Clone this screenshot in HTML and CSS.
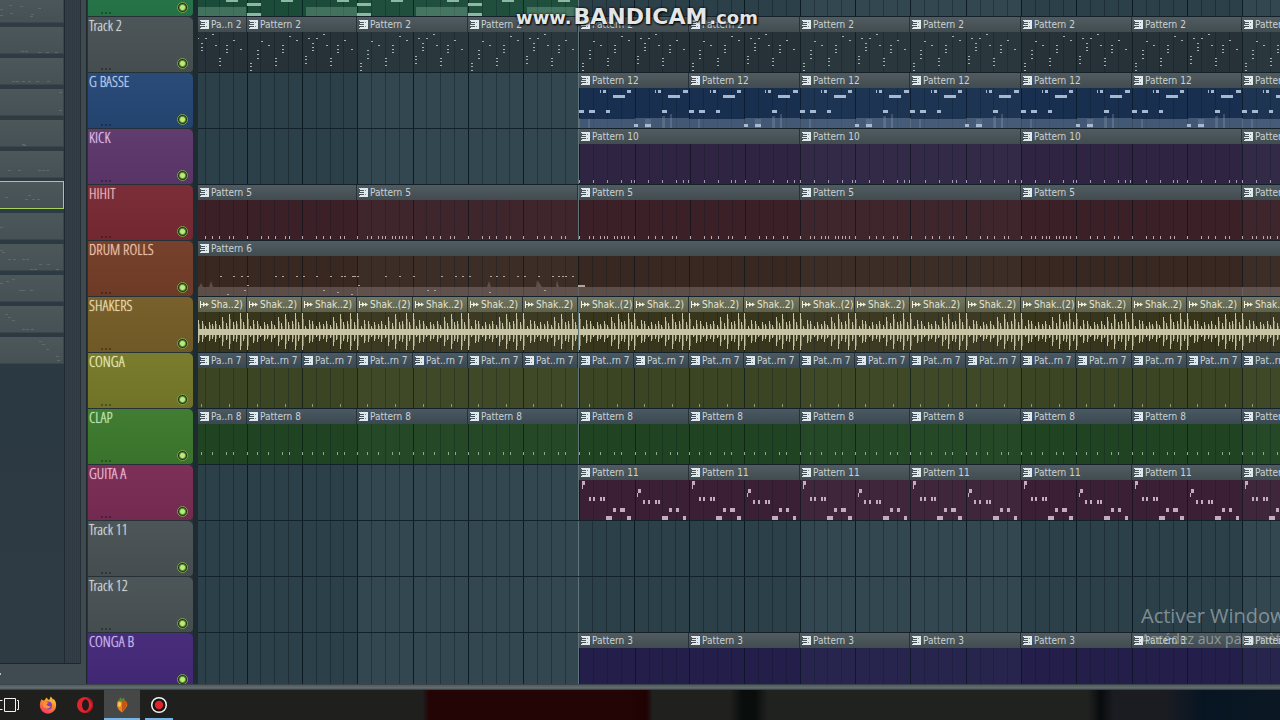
FILE: index.html
```
<!DOCTYPE html>
<html lang="fr">
<head>
<meta charset="utf-8">
<title>Playlist</title>
<link rel="stylesheet" href="styles.css">
</head>
<body>
<svg class="defs" width="0" height="0" aria-hidden="true">
  <symbol id="i-pattern" viewBox="0 0 9 9"><path d="M5 0h4v9H5V8H1V7h4V6H0V5h5V4H1V3h4V2H1V1h4z" fill="#dfe9ee"/><path d="M0 0h5v1H0zM0 8h5v1H0z" fill="#dfe9ee"/><path d="M6 2h1v1H6zM6 6h1v1H6z" fill="#7d8a90"/></symbol>
  <symbol id="i-audio" viewBox="0 0 9 9"><path d="M0 1h1v7H0zM1 4h7v1H1zM3 2l3 2.500-3 2.500zM6 2.500l3 2-3 2z" fill="#f0f0dc"/></symbol>
</svg>
<div class="app">
  <div class="workspace">
    <aside class="side">
      <div class="side-main">
        <div class="picker" id="picker"></div>
        <div class="scroll"></div>
      </div>
      <div class="side-foot"></div>
    </aside>
    <main class="playlist" id="playlist"></main>
    <div class="brand"><span>www.</span><b>BANDICAM</b><span>.com</span></div>
    <div class="activate"><p class="activate-title">Activer Windows</p><p class="activate-text">Accédez aux paramètres</p></div>
  </div>
  <div class="edge"></div>
  <nav class="taskbar">
    <button class="task first" aria-label="Task view"><svg width="20" height="16" viewBox="0 0 20 16" fill="none" stroke="#f2f2f2" stroke-width="1"><path d="M4.500 1.500h11v13h-11zM0 3.500h2.500M0 12.500h2.500M17 3.500h1.500v9H17"/></svg></button>
    <button class="task" aria-label="Firefox"><svg width="18" height="18" viewBox="0 0 18 18"><defs><linearGradient id="ff" x1=".8" y1="0" x2=".3" y2="1"><stop offset="0" stop-color="#ffd83d"/><stop offset=".45" stop-color="#ff8a2b"/><stop offset="1" stop-color="#f0356b"/></linearGradient></defs><path d="M2.500 3.200 4 4.600Q5 4 5.800 4.200 6 2.500 8 1.500 8 3.200 10 4 11.500 2.500 11.500.5q2 1.500 2.400 3.300l1-.8Q17.500 6 17.200 9.600A8.200 8.200 0 0 1 .8 9.300Q.8 6 2.500 3.200z" fill="url(#ff)"/><circle cx="9" cy="9.500" r="4" fill="#7542c4"/><path d="M3.500 7q2-2 4.500-1l2 1Q8 7.200 7.500 8.500q1.500 2.500 4.500 1.500-1.500 3.200-4.700 2.700Q3.800 12 3.500 7z" fill="#ff8f34"/></svg></button>
    <button class="task" aria-label="Opera"><svg width="18" height="18" viewBox="0 0 18 18"><circle cx="9" cy="9" r="8" fill="#e2242f"/><path d="M9 1a8 8 0 1 1 0 16q7-4 7-8T9 1z" fill="#a81722"/><ellipse cx="9.500" cy="9" rx="3.500" ry="5.800" fill="#241a1c"/></svg></button>
    <button class="task active" aria-label="FL Studio"><svg width="14" height="18" viewBox="0 0 14 18"><path d="M3 5Q7 2 11 5.500q3 3-1 7.500-2 3-3 3.500Q3 14 2 10.500 1.200 7 3 5z" fill="#e8861e"/><path d="M7 4q4 0 5 3-1 6-5 9z" fill="#c65416"/><path d="M4 6q2-1 2 2T4 11Q2 8 4 6z" fill="#ffc552"/><path d="M5 1 7 3l2-1.500L9.500 4 7 6 3 5l1.500-1.500z" fill="#4f8a36"/></svg></button>
    <button class="task open" aria-label="Recorder"><svg width="18" height="18" viewBox="0 0 18 18"><circle cx="9" cy="9" r="7.300" fill="#151515" stroke="#f4f4f4" stroke-width="1.500"/><circle cx="9" cy="9" r="4.200" fill="#e0242c"/></svg></button>
  </nav>
</div>
<script src="playlist.js"></script>
</body>
</html>
```
FILE: styles.css
```
* { box-sizing: border-box; }
body { margin: 0; background: #27343c; font-family: "DejaVu Sans Condensed", "DejaVu Sans", sans-serif; }
button { border: 0; padding: 0; background: none; font: inherit; color: inherit; }
.defs { position: absolute; }
.app { height: 100vh; display: flex; flex-direction: column; overflow: hidden; }
.workspace { flex: 1; min-height: 0; display: flex; position: relative; overflow: hidden; background: #3f4b50; }

/* pattern picker */
.side { width: 87px; flex: none; display: flex; flex-direction: column; border-right: 1px solid #1d272c; }
.side-main { flex: 1; min-height: 0; display: flex; margin-right: 5px; border-bottom: 1px solid #1c262c; border-right: 1px solid #242e34; }
.picker { flex: 1; overflow: hidden; background: linear-gradient(#2f3c42, #2b3943 60%, #2f3b43); display: flex; flex-direction: column; gap: 4px; }
.pick { height: 27px; flex: none; background: linear-gradient(#4b5759, #455154); border: solid #3a464a; border-width: 0 1px 1px 0; }
.pick:first-child { margin-top: -4px; }
.pick svg { display: block; width: 63px; height: 25px; }
.pick.selected { height: 28px; margin-top: -1px; border: 1px solid #a5d45e; border-left: 0; }
.scroll { width: 16px; border-left: 1px solid #1f2a30; background: repeating-linear-gradient(90deg, #343e46 0 1px, #2f3941 1px 2px); }
.side-foot { height: 20px; }
.side-foot::before { content: ""; display: block; width: 1px; height: 2px; margin-top: 9px; background: #b6bfc0; }

/* tracks */
.playlist { flex: 1; min-width: 0; overflow: hidden; background: #1e2b31; }
.track { height: 56px; display: flex; }
.track:first-child { margin-top: -39px; }
.label { width: 106px; flex: none; position: relative; margin-right: 5px; border-left: 1px solid #2a3439; background: #263137; }
.plate { height: 55px; padding-left: 1px; border-radius: 0 5px 4px 0; background-color: var(--plate); background-image: linear-gradient(rgba(255,255,255,.02), rgba(0,0,0,.06)); color: var(--ink); font-family: "Open Sans Condensed Light", "Open Sans Condensed", "DejaVu Sans Condensed", sans-serif; font-size: 15px; line-height: 17px; text-shadow: 0 0 1px var(--ink); }
.plate::after { content: ""; position: absolute; left: 13px; bottom: 3px; width: 11px; height: 2px; background: repeating-linear-gradient(90deg, rgba(0,0,0,.3) 0 2px, transparent 2px 4px); }
.led { position: absolute; right: 5px; bottom: 4px; width: 11px; height: 11px; border-radius: 50%; border: 1px solid #7ba04d; background: radial-gradient(circle, #b6ee74 0 2px, #22301a 4px); }
.lane { flex: 1; min-width: 0; position: relative; overflow: hidden; display: flex; }
.lane-grid { position: absolute; inset: 0; }
.clip { position: relative; flex: none; height: 55px; overflow: hidden; }
.clip.playhead { border-left: 1px solid #5f7478; }
.head { height: 15px; padding-left: 2px; display: flex; align-items: center; gap: 2px; overflow: hidden; white-space: nowrap; background: linear-gradient(#525c60, #414c50); border-right: 1px solid #273137; color: #c9d2d5; font-size: 10px; line-height: 15px; }
.head svg { width: 9px; height: 9px; flex: none; }
.track.audio .head { background: linear-gradient(#727560, #5e614a); color: #e4e5d2; }
.track.cool .head { background: linear-gradient(#4b5963, #3a4852); }
.body { display: block; }

/* overlays */
.brand { position: absolute; top: 4px; left: 50%; margin-left: -124px; display: flex; gap: 2px; align-items: baseline; font-family: "DejaVu Sans", sans-serif; font-weight: bold; font-size: 18px; line-height: 26px; color: #e2e6e6; text-shadow: 0 0 3px #000, 1px 1px 2px #000; }
.brand b { font-size: 22px; }
.activate { position: absolute; left: calc(100% - 139px); bottom: 35px; white-space: nowrap; font-family: "Open Sans", "Noto Sans", sans-serif; color: rgba(200,210,212,.55); }
.activate p { margin: 0; }
.activate-title { font-size: 20px; line-height: 26px; }
.activate-text { font-size: 14px; line-height: 20px; }

/* taskbar */
.edge { height: 6px; flex: none; background: linear-gradient(#4f595e, #666f74 60%, #30383c); border-top: 1px solid #3b454a; }
.taskbar { height: 30px; flex: none; display: flex; background: linear-gradient(90deg, #1f1f1e 0 33%, #240506 33.500% 49%, #210203 50.500%, #20211f 51% 57%, #090d0c 58% 59%, #20221f 60% 85%, #080b0d 86%, #1b1c22 87% 91%, #071522 94%, #0b1824); }
.task { width: 37px; height: 30px; display: flex; align-items: center; justify-content: center; }
.task.first { width: 29px; justify-content: flex-start; }
.task.active { width: 36px; margin-left: 1px; background: #464848; border-bottom: 2px solid #76b5e6; padding-top: 2px; }
.task.open { width: 28px; margin-left: 5px; border-bottom: 2px solid #76b5e6; padding-top: 2px; }
```
FILE: playlist.js
```
const BAR = 55.32;
const ORIGIN = 380.49;           // timeline x of the bar under the playhead
const px = bar => Math.round(ORIGIN + bar * BAR);
const lastBar = Math.ceil((window.innerWidth - 198 - ORIGIN) / BAR / 4) * 4;
const rect = (x, y, w, h, c) => `<rect x="${x}" y="${y}" width="${w}" height="${h}" fill="${c}"/>`;

function grid(x0, x1, h, strength) {
  let s = '';
  for (let b = -8; b <= lastBar; b += 4) {
    if (b % 8) s += rect(px(b) - x0, 0, px(b + 4) - px(b), h, `rgba(190,210,220,${strength === 1 ? 0.05 : 0.03})`);
  }
  for (let q = -28; q <= lastBar * 4; q++) {
    const x = px(q / 4);
    if (x < x0 || x >= x1) continue;
    s += rect(x - x0, 0, 1, h, q % 4 ? `rgba(8,22,30,${strength * 0.38})` : `rgba(4,16,22,${strength * 0.8})`);
  }
  return s;
}

const cells = (xs, y, w, h) => xs.map(x => [x, y, w, h]);
const ticks = (xs, y) => cells(xs, y, 1, 3);
const column = (x, ys) => ys.map(y => [x, y, 2, 1]);

const melody = [
  ...column(3, [31, 34, 38]), ...column(10, [18, 22, 26]), ...column(14, [9]), ...column(21, [13]),
  ...column(28, [26, 29, 33]), ...column(35, [13, 17, 20]), ...column(42, [4]), ...column(49, [8]),
  ...column(58, [24, 27, 31]), ...column(61, [6]), ...column(65, [11, 15, 18]), ...column(69, [6]),
  ...column(76, [2]), ...column(79, [13]), ...column(83, [26, 29, 33]), ...column(90, [13, 17, 20]),
  ...column(97, [8]), ...column(104, [17])
];
const bass = [
  [0, 22, 5, 3], [10, 22, 6, 3], [27, 22, 4, 3], [21, 2, 1, 3], [24, 2, 3, 3], [34, 7, 12, 3], [48, 2, 4, 3],
  [76, 2, 1, 3], [79, 2, 3, 3], [89, 7, 12, 3], [104, 2, 5, 3], [83, 22, 5, 3], [55, 36, 4, 3], [66, 36, 6, 3]
];
const guitar = [
  [3, 1, 3, 4], [3, 5, 1, 4], ...cells([10, 14, 21, 24], 17, 2, 4), [34, 28, 3, 4], [41, 28, 5, 4], [27, 36, 6, 4], [48, 36, 4, 4],
  [59, 9, 3, 4], [58, 13, 1, 4], ...cells([64, 69, 76, 79], 20, 2, 4), [90, 28, 3, 4], [97, 28, 3, 4], [83, 36, 6, 4], [104, 36, 3, 4]
];
const hats = [0, 10, 14, 21, 25, 28, 35, 38, 42, 45, 49];
[1, 2, 3].forEach(b => [0, 14, 21, 28, 38, 42].forEach(x => hats.push(Math.round(b * BAR) + x)));
const kick = [0, 14, 28, 42, 52, 55, 69, 83, 97, 104, 109, 125, 139, 152, 156, 166, 180, 194, 208, 215];
const lead = [[34, 23, 12, 3], [90, 23, 12, 3], [0, 27, 14, 3], [0, 37, 14, 3]];

// Drum rolls are a single long take, listed in timeline pixels.
const rolls = [
  ...cells([22, 35, 43, 49, 77, 84, 98, 105, 118, 132, 143, 146, 154, 156, 159, 187, 201, 215, 243, 257, 264, 271, 292, 298, 305, 319, 326, 340, 354, 360, 364, 367, 374], 20, 2, 1),
  ...column(49, [29]), ...column(160, [29]), ...column(46, [34]), ...column(29, [38]), ...column(125, [34]), ...column(139, [36]),
  ...column(153, [38]), ...column(229, [34]), ...column(236, [34]), ...column(291, [36]), ...column(346, [34]), [380, 29, 7, 2]
];

const peaks = [19, 6, 12, 11, 6, 10, 8, 11, 7, 15, 9, 18, 10, 11, 19, 10];
function wave(x0, x1) {
  let s = rect(0, 17, x1 - x0, 6, '#c6c4a4');
  for (let b = -7; b < lastBar; b++) {
    peaks.forEach((p, i) => {
      const x = px(b + i / 16);
      if (x < x0 - 1 || x > x1) return;
      const c = x - x0;
      s += rect(c, 20 - p, 1, p * 2 - 1, '#c6c4a4') + rect(c + 1, 20 - Math.round(p * 0.7), 1, Math.round(p * 1.4), 'rgba(198,196,164,.5)');
    });
  }
  return s;
}

const every = (name, step, from, first) => {
  const list = first ? [[name[0], first[0], first[1]]] : [];
  for (let b = from; b < lastBar; b += step) list.push([name[1], b, b + step]);
  return list;
};
const START = (0 - ORIGIN) / BAR;

const tracks = [
  { name: 'Track 1', plate: '#26784a', ink: '#bfeacb', body: '#1b4b39', note: '#8fb8a2', period: 2, notes: lead, bands: [[59, 31, 51, 9, 'rgba(170,215,190,.28)']],
    clips: [['Pattern 1', START, -6], ['Pattern 1', -6, -4], ['Pattern 1', -4, -2], ['Pattern 1', -2, 0]] },
  { name: 'Track 2', plate: '#495254', ink: '#d0d7d8', body: '#263238', note: '#a3b1b5', period: 2, notes: melody, clips: every(['Pa..n 2', 'Pattern 2'], 2, -6, [START, -6]) },
  { name: 'G BASSE', plate: '#264876', ink: '#b7cdef', body: '#182f4f', note: '#a6b9d1', period: 2, notes: bass,
    bands: [[0, 31, 56, 9, 'rgba(140,160,185,.36)'], [56, 30, 55, 10, 'rgba(140,160,185,.36)'], [83, 28, 3, 12, 'rgba(160,180,200,.25)'], [91, 26, 2, 14, 'rgba(160,180,200,.25)'], [9, 31, 2, 9, 'rgba(160,180,200,.2)'], [66, 31, 6, 9, 'rgba(160,180,200,.2)']], clips: every(['', 'Pattern 12'], 2, 0) },
  { name: 'KICK', plate: '#5d386c', ink: '#dfbfe9', body: '#2f2543', note: '#a49ab2', period: 4, notes: ticks(kick, 36), clips: every(['', 'Pattern 10'], 4, 0) },
  { name: 'HIHIT', plate: '#792a34', ink: '#eeb9bf', body: '#3b2028', note: '#bda8ab', period: 4, notes: ticks(hats, 36), clips: every(['Pattern 5', 'Pattern 5'], 4, -4, [START, -4]) },
  { name: 'DRUM ROLLS', plate: '#743e28', ink: '#edc4ae', body: '#392822', note: '#b5a49d', once: rolls, bands: [[0, 31, 111, 9, 'rgba(180,165,165,.3)']], period: 2, clips: [['Pattern 6', START, lastBar]] },
  { name: 'SHAKERS', plate: '#765e28', ink: '#ecddb0', body: '#38351d', audio: true, clips: every(['Sha..2)', 'Shak..2)'], 1, -6, [START, -6]) },
  { name: 'CONGA', plate: '#777a29', ink: '#e9ebb5', body: '#3b4523', note: '#8d9970', cool: true, period: 1, notes: ticks([10, 38], 36), clips: every(['Pa..n 7', 'Pat..rn 7'], 1, -6, [START, -6]) },
  { name: 'CLAP', plate: '#3d7a2e', ink: '#c2e9b6', body: '#204422', note: '#8bab8c', cool: true, period: 1, notes: ticks([0, 10, 21, 35, 42], 28), clips: every(['Pa..n 8', 'Pattern 8'], 2, -6, [START, -6]) },
  { name: 'GUITA A', plate: '#7a2c55', ink: '#eebbd5', body: '#3b2035', note: '#c4acc0', period: 2, notes: guitar, clips: every(['', 'Pattern 11'], 2, 0) },
  { name: 'Track 11', plate: '#495254', ink: '#d0d7d8', clips: [] },
  { name: 'Track 12', plate: '#495254', ink: '#d0d7d8', clips: [] },
  { name: 'CONGA B', plate: '#45297a', ink: '#cdbaf0', body: '#231f4a', clips: every(['', 'Pattern 3'], 2, 0) }
];

function clipHtml(t, [name, from, to]) {
  const x0 = Math.max(0, px(from)), x1 = px(to), w = x1 - x0;
  let s = rect(0, 0, w, 40, t.body) + grid(x0, x1, 40, 0.75);
  for (let b = -8; t.period && b < to; b += t.period) {
    const at = px(b) - x0;
    for (const [x, y, bw, h, c] of t.bands || []) if (at + x + bw > 0 && at + x < w) s += rect(at + x, y, bw, h, c);
    for (const [x, y, nw, h] of t.notes || []) if (at + x + nw > 0 && at + x < w) s += rect(at + x, y, nw, h, t.note);
  }
  if (t.once) {
    s += t.once.map(([x, y, nw, h]) => rect(x, y, nw, h, t.note)).join('');
    s += '<path d="M1 31l2-4 2 4zM11 31l2-6 2 6zM289 31l2-6 2 6zM338 31l1-7 3 4 2 3zM358 31l1-7 2 7z" fill="rgba(180,165,165,.3)"/>';
  }
  if (t.audio) {
    if (name !== 'Sha..2)' && from % 4 === 0) name = 'Shak..(2)';
    s += wave(x0, x1);
  }
  const icon = t.audio ? 'i-audio' : 'i-pattern';
  const gap = t.first && x0 > 0 ? `margin-left:${x0}px;` : '';
  t.first = false;
  return `<div class="clip${from === 0 ? ' playhead' : ''}" style="${gap}width:${w}px"><div class="head"><svg><use href="#${icon}"/></svg><span>${t.name === 'Track 1' ? '' : name}</span></div><svg class="body" width="${w}" height="40">${s}</svg></div>`;
}

const laneWidth = window.innerWidth - 198;
document.getElementById('playlist').innerHTML = tracks.map(t => {
  t.first = true;
  const back = rect(0, 0, laneWidth, 56, '#2c404a') + grid(0, laneWidth, 56, 1) + rect(px(0), 0, 1, 56, '#5f7478') + rect(0, 55, laneWidth, 1, '#13222a');
  return `<section class="track${t.audio ? ' audio' : ''}${t.cool ? ' cool' : ''}">
    <div class="label" style="--plate:${t.plate};--ink:${t.ink}"><div class="plate">${t.name === 'Track 1' ? '' : t.name}</div><button class="led" aria-label="Mute ${t.name}"></button></div>
    <div class="lane"><svg class="lane-grid" width="${laneWidth}" height="56">${back}</svg>${t.clips.map(c => clipHtml(t, c)).join('')}</div>
  </section>`;
}).join('');

const sketches = [
  [[9, 8], [10, 16], [0, 12], [0, 18], [20, 9], [31, 17], [30, 19], [38, 11]], [[21, 23], [25, 23], [38, 24], [46, 24], [55, 24]], [[12, 22], [16, 22], [22, 22], [28, 22], [36, 22], [47, 22]],
  [[59, 2], [59, 20]], [[22, 23], [23, 24]], [[8, 18], [18, 18], [38, 18], [42, 18], [46, 18]], [[5, 14], [25, 16], [32, 16], [37, 16], [28, 12]], [[0, 13]],
  [[0, 5], [2, 7], [8, 14], [13, 14], [22, 14], [26, 14], [39, 19], [47, 19], [30, 24], [34, 24], [56, 24]], [[0, 7], [6, 5], [12, 3], [19, 14], [22, 14], [30, 14]], [[5, 7], [8, 10], [12, 13], [22, 22], [26, 22], [31, 22]], [[39, 3], [42, 6], [46, 11], [56, 18], [57, 22]]
];
document.getElementById('picker').innerHTML = sketches.map((n, i) =>
  `<button class="pick${i === 6 ? ' selected' : ''}" aria-label="Pattern ${i + 1}"><svg>${n.map(([x, y]) => rect(x, y, 3, 1, '#5d696c')).join('')}</svg></button>`).join('');
```
